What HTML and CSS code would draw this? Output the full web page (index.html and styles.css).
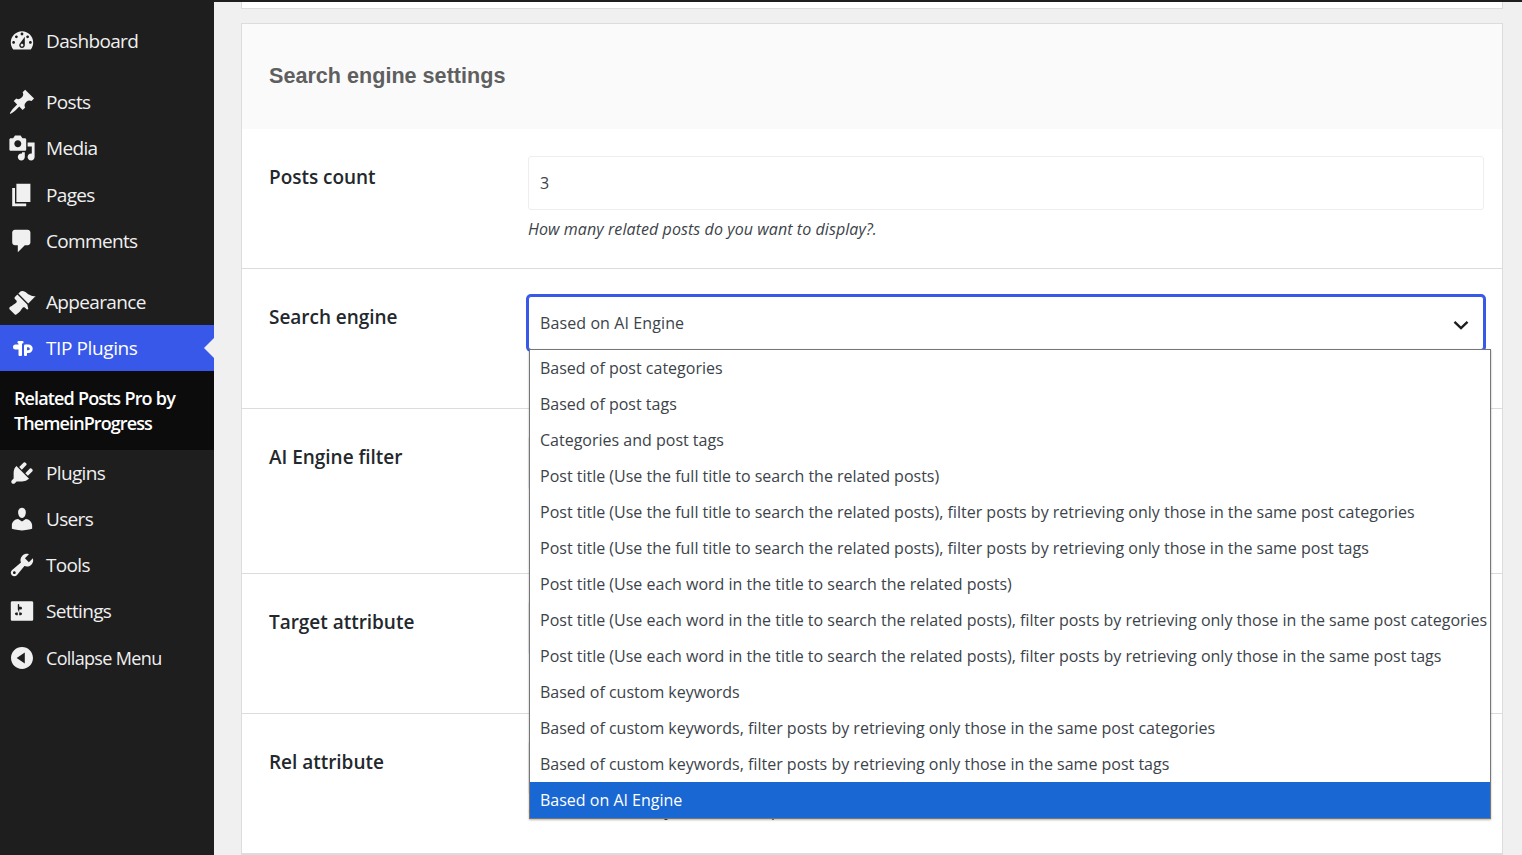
FILE: index.html
```html
<!DOCTYPE html>
<html lang="en">
<head>
  <meta charset="UTF-8">
  <title>Related Posts Pro</title>
  <link rel="stylesheet" href="styles.css">
</head>
<body>
  <div class="topbar"></div>
  <div class="wrap">
    <nav class="sidebar">
      <a class="menu-item"><svg viewBox="0 0 20 20"><path d="M3.76 16h12.48c1.1-1.37 1.76-3.11 1.76-5 0-4.42-3.58-8-8-8s-8 3.58-8 8c0 1.89.66 3.63 1.76 5zM10 4c.55 0 1 .45 1 1s-.45 1-1 1-1-.45-1-1 .45-1 1-1zM6 6c.55 0 1 .45 1 1s-.45 1-1 1-1-.45-1-1 .45-1 1-1zm8 0c.55 0 1 .45 1 1s-.45 1-1 1-1-.45-1-1 .45-1 1-1zm-5.37 5.55L12 7v6c0 1.1-.9 2-2 2s-2-.9-2-2c0-.57.24-1.08.63-1.45zM4 10c.55 0 1 .45 1 1s-.45 1-1 1-1-.45-1-1 .45-1 1-1zm12 0c.55 0 1 .45 1 1s-.45 1-1 1-1-.45-1-1 .45-1 1-1zm-5 3c0-.55-.45-1-1-1s-1 .45-1 1 .45 1 1 1 1-.45 1-1z"/></svg>Dashboard</a>
      <div class="menu-sep"></div>
      <a class="menu-item"><svg viewBox="0 0 20 20"><path d="M10.44 3.02l1.82-1.82 6.36 6.35-1.83 1.82c-1.05-.68-2.48-.57-3.41.36l-.75.75c-.92.93-1.04 2.35-.35 3.41l-1.83 1.82-2.41-2.41-2.8 2.79c-.42.42-3.38 2.71-3.8 2.29s1.86-3.39 2.28-3.81l2.79-2.79L4.1 9.36l1.83-1.82c1.05.69 2.48.57 3.4-.36l.75-.75c.93-.92 1.05-2.35.36-3.41z"/></svg>Posts</a>
      <a class="menu-item"><svg viewBox="0 0 20 20"><path d="M13 11V4c0-.55-.45-1-1-1h-1.67L9 1H5L3.67 3H2c-.55 0-1 .45-1 1v7c0 .55.45 1 1 1h10c.55 0 1-.45 1-1zM7 4.5c1.38 0 2.5 1.12 2.5 2.5S8.38 9.5 7 9.5 4.5 8.38 4.5 7 5.62 4.5 7 4.5zM14 6h5v10.5c0 1.38-1.12 2.5-2.5 2.5S14 17.88 14 16.5s1.12-2.5 2.5-2.5c.17 0 .34.02.5.05V9h-3V6zm-4 8.05V13h2v3.5c0 1.38-1.12 2.5-2.5 2.5S7 17.88 7 16.5 8.12 14 9.5 14c.17 0 .34.02.5.05z"/></svg>Media</a>
      <a class="menu-item spaced"><svg viewBox="0 0 20 20"><path d="M6 15V2h10v13H6zm-1 1h8v2H3V5h2v11z"/></svg>Pages</a>
      <a class="menu-item"><svg viewBox="0 0 20 20"><path d="M5 2h9c1.1 0 2 .9 2 2v7c0 1.1-.9 2-2 2h-2l-5 5v-5H5c-1.1 0-2-.9-2-2V4c0-1.1.9-2 2-2z"/></svg>Comments</a>
      <div class="menu-sep"></div>
      <a class="menu-item"><svg viewBox="0 0 20 20"><path d="M14.48 11.06L7.41 3.99l1.5-1.5c.5-.56 2.3-.47 3.51.32 1.21.8 1.43 1.28 2.91 2.1 1.18.64 2.45 1.26 4.45.85zm-.71.71L6.7 4.7 4.93 6.47c-.39.39-.39 1.02 0 1.41l1.06 1.06c.39.39.39 1.03 0 1.42-.6.6-1.43 1.11-2.21 1.69-.35.26-.7.53-1.01.84C1.43 13.23.4 14.4 1.1 15.1l3.78 3.78c.7.7 1.87-.33 3.21-1.67.31-.31.58-.66.84-1.01.58-.78 1.09-1.61 1.69-2.21.39-.39 1.03-.39 1.42 0l1.06 1.06c.39.39 1.02.39 1.41 0z"/></svg>Appearance</a>
      <a class="menu-item current"><svg viewBox="0 0 28 28"><rect x="5" y="10.500" width="8" height="5" rx="2.500"/><rect x="10.500" y="7" width="3.500" height="15" rx="1"/><rect x="9.500" y="7" width="6" height="2.600" rx="1"/><rect x="16" y="10.500" width="3" height="11.500" rx="1"/><path d="M18 10.500h2.500a4.200 4.200 0 0 1 0 8.400H18v-2.700h2.300a1.500 1.500 0 0 0 0-3H18z"/></svg>TIP Plugins</a>
      <div class="submenu">
        <a class="submenu-item">Related Posts Pro by ThemeinProgress</a>
      </div>
      <a class="menu-item"><svg viewBox="0 0 20 20"><path d="M13.11 4.36L9.87 7.6 8 5.73l3.24-3.24c.35-.34 1.05-.2 1.56.32.52.51.66 1.21.31 1.55zm-8 1.77l.91-1.12 9.01 9.01-1.19.84c-.71.71-2.63 1.16-3.82 1.16H6.14L4.9 17.26c-.59.59-1.54.59-2.12 0-.59-.58-.59-1.53 0-2.12l1.24-1.24v-3.88c0-1.13.4-3.19 1.09-3.89zm7.26 3.97l3.24-3.24c.34-.35 1.04-.21 1.55.31.52.51.66 1.21.31 1.55l-3.24 3.25z"/></svg>Plugins</a>
      <a class="menu-item"><svg viewBox="0 0 20 20"><path d="M10 9.25c-2.27 0-2.73-3.44-2.73-3.44C7 4.02 7.82 2 9.97 2c2.16 0 2.98 2.02 2.71 3.81 0 0-.41 3.44-2.68 3.44zm0 2.57L12.72 10c2.39 0 4.52 2.33 4.52 4.53v2.49s-3.65 1.13-7.24 1.13c-3.65 0-7.24-1.13-7.24-1.13v-2.49c0-2.25 1.94-4.48 4.47-4.48z"/></svg>Users</a>
      <a class="menu-item"><svg viewBox="0 0 20 20"><path d="M16.68 9.77c-1.34 1.34-3.3 1.67-4.95.99l-5.41 6.52c-.99.99-2.59.99-3.58 0s-.99-2.59 0-3.57l6.52-5.42c-.68-1.65-.35-3.61.99-4.95 1.28-1.28 3.12-1.62 4.72-1.06l-2.89 2.89 2.82 2.82 2.86-2.87c.53 1.58.18 3.39-1.08 4.65zM3.810 16.21c.4.39 1.04.39 1.43 0 .4-.4.4-1.04 0-1.43-.39-.4-1.03-.4-1.43 0-.39.39-.39 1.03 0 1.43z"/></svg>Tools</a>
      <a class="menu-item"><svg viewBox="0 0 20 20"><path d="M18 16V4c0-.55-.45-1-1-1H3c-.55 0-1 .45-1 1v12c0 .55.45 1 1 1h14c.55 0 1-.45 1-1zM8 11h1c.55 0 1 .45 1 1s-.45 1-1 1H8v1.500c0 .28-.22.5-.5.5s-.5-.22-.5-.5V13H6c-.55 0-1-.45-1-1s.45-1 1-1h1V5.500c0-.28.22-.5.5-.5s.5.22.5.5V7h1c.55 0 1 .45 1 1s-.45 1-1 1h-1v5.500c0 .28-.22.5-.5.5s-.5-.22-.5-.5V9z"/></svg>Settings</a>
      <a class="menu-item collapse"><svg viewBox="0 0 20 20"><path d="M10 2.160c4.330 0 7.840 3.510 7.840 7.840s-3.510 7.840-7.840 7.840S2.160 14.330 2.160 10 5.710 2.160 10 2.160zm2 11.720V6.120L6.180 9.970z"/></svg>Collapse Menu</a>
    </nav>

    <main class="content">
      <div class="prev-card"></div>
      <section class="card">
        <h2 class="card-title">Search engine settings</h2>

        <div class="row">
          <div class="row-label">Posts count</div>
          <div class="row-field">
            <div class="control">3</div>
            <p class="desc">How many related posts do you want to display?.</p>
          </div>
        </div>

        <div class="row">
          <div class="row-label">Search engine</div>
          <div class="row-field">
            <div class="select-wrap">
              <div class="control focused">Based on AI Engine
                <svg class="chevron" viewBox="0 0 16 10"><path d="M1.500 1.800 8 8l6.500-6.200"/></svg>
              </div>
              <ul class="dropdown">
                <li>Based of post categories</li>
                <li>Based of post tags</li>
                <li>Categories and post tags</li>
                <li>Post title (Use the full title to search the related posts)</li>
                <li>Post title (Use the full title to search the related posts), filter posts by retrieving only those in the same post categories</li>
                <li>Post title (Use the full title to search the related posts), filter posts by retrieving only those in the same post tags</li>
                <li>Post title (Use each word in the title to search the related posts)</li>
                <li>Post title (Use each word in the title to search the related posts), filter posts by retrieving only those in the same post categories</li>
                <li>Post title (Use each word in the title to search the related posts), filter posts by retrieving only those in the same post tags</li>
                <li>Based of custom keywords</li>
                <li>Based of custom keywords, filter posts by retrieving only those in the same post categories</li>
                <li>Based of custom keywords, filter posts by retrieving only those in the same post tags</li>
                <li class="selected">Based on AI Engine</li>
              </ul>
            </div>
            <div class="desc"></div>
          </div>
        </div>

        <div class="row">
          <div class="row-label">AI Engine filter</div>
          <div class="row-field">
            <div class="control"></div>
            <div class="desc two-lines"></div>
          </div>
        </div>

        <div class="row">
          <div class="row-label">Target attribute</div>
          <div class="row-field">
            <div class="control"></div>
            <div class="desc"></div>
          </div>
        </div>

        <div class="row">
          <div class="row-label">Rel attribute</div>
          <div class="row-field">
            <div class="control"></div>
            <p class="desc tight">Choose a link rel key to add on all posts</p>
          </div>
        </div>
      </section>
    </main>
  </div>
</body>
</html>
```

FILE: styles.css
```css
html, body {
  height: 100%;
  overflow: hidden;
}
body {
  margin: 0;
  background: #f0f0f0;
  font-family: "Open Sans", sans-serif;
  font-size: 16px;
  color: #3c434a;
}
.topbar {
  height: 2px;
  background: #1e1e1e;
}
.wrap {
  display: flex;
  height: calc(100% - 2px);
}

/* admin menu */
.sidebar {
  flex: 0 0 214px;
  background: #1e1e1e;
  padding-top: 16px;
  box-sizing: border-box;
}
.menu-item {
  display: flex;
  align-items: center;
  height: 46px;
  padding-left: 8px;
  color: #f0f0f0;
  font-size: 19px;
  letter-spacing: -0.65px;
}
.menu-item svg {
  width: 28px;
  height: 28px;
  margin-right: 10px;
  fill: #f0f0f0;
  flex: none;
}
.menu-item.spaced {
  margin-top: 1px;
}
.menu-sep {
  height: 15px;
}
.menu-item.current {
  position: relative;
  background: #3858e9;
  color: #fff;
  letter-spacing: -0.4px;
}
.menu-item.current svg {
  fill: #fff;
}
.menu-item.current::after {
  content: "";
  position: absolute;
  right: 0;
  top: 50%;
  margin-top: -10px;
  border: 10px solid transparent;
  border-right-color: #f0f0f0;
}
.menu-item.collapse {
  margin-top: 1px;
  font-size: 18px;
  letter-spacing: -0.65px;
}
.submenu {
  background: #0c0c0c;
  height: 79px;
  padding: 15px 14px 0;
  box-sizing: border-box;
}
.submenu-item {
  display: block;
  color: #fff;
  font-size: 18px;
  font-weight: 600;
  line-height: 25px;
  letter-spacing: -0.9px;
  word-spacing: 0.5px;
}

/* settings */
.content {
  flex: 1;
  padding: 0 19px 0 27px;
}
.prev-card {
  height: 6px;
  background: #fff;
  border: 1px solid #dcdcdc;
  border-top: 0;
  margin-bottom: 14px;
}
.card {
  background: #fff;
  border: 1px solid #dcdcdc;
}
.card-title {
  margin: 0;
  height: 105px;
  box-sizing: border-box;
  padding: 0 0 2px 27px;
  display: flex;
  align-items: center;
  background: #fafafa;
  font-family: "Liberation Sans", sans-serif;
  font-size: 21.6px;
  font-weight: 700;
  color: #5f5f5f;
}
.row {
  display: flex;
  padding: 27px 18px 26px 27px;
  border-bottom: 1px solid #dcdcdc;
}
.row-label {
  flex: 0 0 259px;
  padding-top: 8px;
  font-size: 19px;
  font-weight: 600;
  line-height: 26px;
  color: #23282d;
  letter-spacing: -0.03px;
}
.row-field {
  flex: 1;
  min-width: 0;
}
.control {
  position: relative;
  height: 54px;
  box-sizing: border-box;
  display: flex;
  align-items: center;
  padding: 0 11px;
  background: #fff;
  border: 1px solid #eeeeee;
  border-radius: 3px;
}
.control.focused {
  border-color: #3858e9;
  box-shadow: 0 0 0 2px #3858e9;
  letter-spacing: 0.1px;
}
.chevron {
  position: absolute;
  right: 14px;
  top: 23px;
  width: 16px;
  height: 10px;
  fill: none;
  stroke: #1e1e1e;
  stroke-width: 2.4;
}
.desc {
  margin: 7px 0 0;
  font-style: italic;
  line-height: 25px;
  min-height: 25px;
  letter-spacing: 0.08px;
}
.desc.two-lines {
  min-height: 50px;
}
.desc.tight {
  margin: 3px 0 4px;
}
.select-wrap {
  position: relative;
}
.dropdown {
  position: absolute;
  left: 1px;
  top: 53px;
  width: 962px;
  box-sizing: border-box;
  margin: 0;
  padding: 0;
  list-style: none;
  background: #fff;
  border: 1px solid #767676;
  box-shadow: 0 1px 2px rgba(0, 0, 0, 0.3);
  z-index: 10;
}
.dropdown li {
  height: 36px;
  line-height: 36px;
  padding-left: 10px;
  white-space: nowrap;
}
.dropdown li.selected {
  background: #1967d2;
  color: #fff;
}
```
